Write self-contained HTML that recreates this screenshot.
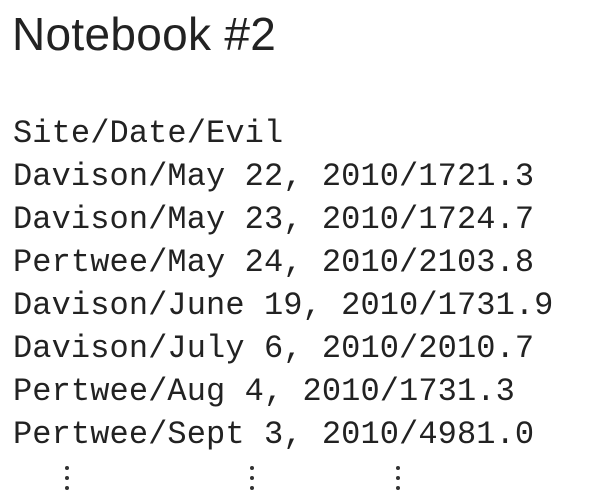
<!DOCTYPE html>
<html><head><style>
body{margin:0;width:600px;height:493px;background:#fff;overflow:hidden;position:relative;color:#222}
.t{position:absolute;left:12px;top:8px;font:46px/52px "Liberation Sans",sans-serif;letter-spacing:0.3px}
.m{position:absolute;left:13px;top:112px;font:32px/43px "Liberation Mono",monospace;white-space:pre;letter-spacing:0.1px}
.d{position:absolute;width:4px;height:4px;background:#333;border-radius:50%}
</style></head><body>
<div class="t">Notebook #2</div>
<div class="m">Site/Date/Evil
Davison/May 22, 2010/1721.3
Davison/May 23, 2010/1724.7
Pertwee/May 24, 2010/2103.8
Davison/June 19, 2010/1731.9
Davison/July 6, 2010/2010.7
Pertwee/Aug 4, 2010/1731.3
Pertwee/Sept 3, 2010/4981.0</div>
<div class="d" style="left:65px;top:466px"></div><div class="d" style="left:65px;top:476px"></div><div class="d" style="left:65px;top:486px"></div>
<div class="d" style="left:250px;top:466px"></div><div class="d" style="left:250px;top:476px"></div><div class="d" style="left:250px;top:486px"></div>
<div class="d" style="left:396px;top:466px"></div><div class="d" style="left:396px;top:476px"></div><div class="d" style="left:396px;top:486px"></div>
</body></html>
